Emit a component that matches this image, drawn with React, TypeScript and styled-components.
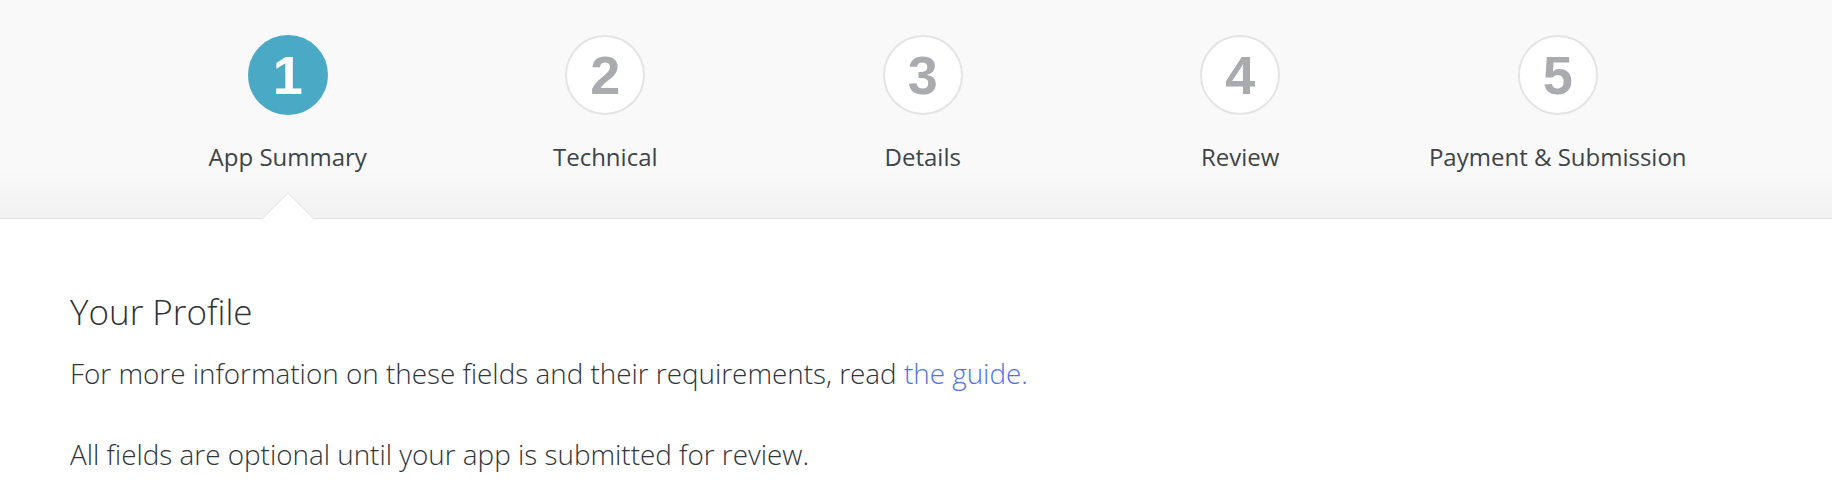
import styled, { createGlobalStyle } from "styled-components";

const GlobalStyle = createGlobalStyle`
  body {
    margin: 0;
    background: #fff;
    font-family: "Open Sans", "Liberation Sans", sans-serif;
    color: #3d4449;
  }
`;

const Header = styled.header`
  background: linear-gradient(
    to bottom,
    #f9f9f9 0%,
    #f9f9f9 78%,
    #f1f1f1 100%
  );
  border-bottom: 1px solid #e4e4e4;
  height: 219px;
  box-sizing: border-box;
  padding: 35px 0 0 129px;
`;

const Steps = styled.ol`
  display: flex;
  list-style: none;
  margin: 0;
  padding: 0;
`;

const Step = styled.li`
  position: relative;
  width: 317.5px;
  height: 183px;
  display: flex;
  flex-direction: column;
  align-items: center;
`;

const Circle = styled.div<{ $active?: boolean }>`
  width: 80px;
  height: 80px;
  box-sizing: border-box;
  border-radius: 50%;
  display: flex;
  align-items: center;
  justify-content: center;
  background: ${(p) => (p.$active ? "#4aaac6" : "#fff")};
  border: 2px solid ${(p) => (p.$active ? "#4aaac6" : "#e4e4e4")};
  color: ${(p) => (p.$active ? "#fff" : "#aaabaf")};
  font-family: "Liberation Sans", Arial, sans-serif;
  font-weight: 700;
  font-size: 54px;
  line-height: 1;
`;

const Label = styled.span`
  margin-top: 25px;
  font-size: 24px;
  line-height: normal;
  color: #3d4449;
  white-space: nowrap;
`;

const Notch = styled.span`
  position: absolute;
  bottom: -20px;
  left: 50%;
  width: 37px;
  height: 37px;
  margin-left: -18.5px;
  background: #fff;
  border-top: 1px solid #e6e6e6;
  border-left: 1px solid #e6e6e6;
  transform: rotate(45deg);
`;

const Main = styled.main`
  padding: 69px 70px 0;
`;

const Title = styled.h2`
  margin: 0;
  font-size: 35px;
  font-weight: 300;
  line-height: normal;
  color: #2e3237;
`;

const Text = styled.p`
  margin: 19px 0 0;
  font-size: 27.85px;
  font-weight: 300;
  line-height: normal;
  color: #2f353a;

  & + & {
    margin-top: 43px;
  }
`;

const Link = styled.a`
  color: #4f74e4;
  text-decoration: none;
`;

const steps = [
  "App Summary",
  "Technical",
  "Details",
  "Review",
  "Payment & Submission",
];

export default function App() {
  return (
    <>
      <GlobalStyle />
      <Header>
        <Steps>
          {steps.map((name, i) => (
            <Step key={name}>
              <Circle $active={i === 0}>{i + 1}</Circle>
              <Label>{name}</Label>
              {i === 0 && <Notch />}
            </Step>
          ))}
        </Steps>
      </Header>
      <Main>
        <Title>Your Profile</Title>
        <Text>
          For more information on these fields and their requirements, read{" "}
          <Link href="#">the guide.</Link>
        </Text>
        <Text>All fields are optional until your app is submitted for review.</Text>
      </Main>
    </>
  );
}
